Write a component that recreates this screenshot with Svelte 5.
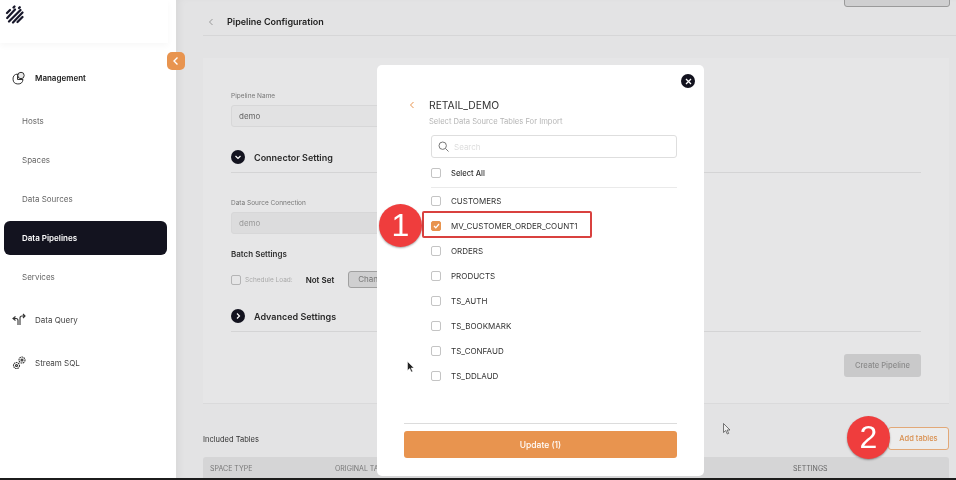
<script>
  const subItems = ['Hosts', 'Spaces', 'Data Sources', 'Data Pipelines', 'Services'];
  const tables = ['CUSTOMERS', 'MV_CUSTOMER_ORDER_COUNT1', 'ORDERS', 'PRODUCTS', 'TS_AUTH', 'TS_BOOKMARK', 'TS_CONFAUD', 'TS_DDLAUD'];
  const checked = 'MV_CUSTOMER_ORDER_COUNT1';
  const active = 'Data Pipelines';
</script>

<div class="screen">
  <aside class="sidebar">
    <div class="logo-bar">
      <svg class="logo" width="20" height="20" viewBox="0 0 20 20" fill="none" stroke="#17172a" stroke-width="2.200" stroke-linecap="round">
        <path d="M2 8l3-3M2.200 13L10 4.500M4 16.500L15.500 5M8 17.500L17.500 7.500M12.500 17l5-5M8.500 2.500l1-1M14 3l.8-.8"/>
      </svg>
    </div>
    <nav class="nav">
      <div class="nav-head strong">
        <svg width="14" height="14" viewBox="0 0 14 14" fill="none" stroke="#333" stroke-width="1"><path d="M5.500 3a5 5 0 1 0 5.500 5.500H5.500z"/><circle cx="9" cy="4.500" r="3.200" fill="#e8e8e8"/></svg>
        <span>Management</span>
      </div>
      {#each subItems as item}
        <div class="nav-sub" class:active={item === active}>{item}</div>
      {/each}
      <div class="nav-head query">
        <svg width="14" height="14" viewBox="0 0 14 14" fill="none" stroke="#333" stroke-width="1.100"><path d="M3.500 3.500L1 5.500l2.500 2M1 5.500h3q2 0 2 2V12M8 12V5q0-2 2-2h2.500M11 1l2 2-2 2"/></svg>
        <span>Data Query</span>
      </div>
      <div class="nav-head">
        <svg width="14" height="14" viewBox="0 0 14 14" fill="none" stroke="#333" stroke-width="1.100"><circle cx="4.500" cy="9.500" r="3" stroke-dasharray="1.600 .6"/><circle cx="4.500" cy="9.500" r="1"/><circle cx="10" cy="4" r="3" stroke-dasharray="1.600 .6"/><circle cx="10" cy="4" r="1"/></svg>
        <span>Stream SQL</span>
      </div>
    </nav>
  </aside>

  <main class="main">
    <div class="top-btn"></div>
    <header class="page-head">
      <svg width="6" height="8" viewBox="0 0 6 8" fill="none" stroke="#999" stroke-width="1"><path d="M4.500 1L1.500 4l3 3"/></svg>
      <h1>Pipeline Configuration</h1>
    </header>

    <section class="card">
      <label class="field-label" for="pipeline-name">Pipeline Name</label>
      <div class="input" id="pipeline-name">demo</div>

      <div class="section-row">
        <span class="round"><svg width="8" height="8" viewBox="0 0 8 8" fill="none" stroke="#fff" stroke-width="1.200"><path d="M1.500 3L4 5.500 6.500 3"/></svg></span>
        <h2>Connector Setting</h2>
      </div>
      <div class="rule"></div>

      <div class="field-label conn">Data Source Connection</div>
      <div class="input muted">demo</div>

      <h3>Batch Settings</h3>
      <div class="batch">
        <span class="box dim"></span>
        <span class="sched">Schedule Load:</span>
        <span class="notset">Not Set</span>
        <span class="change">Change</span>
      </div>

      <div class="section-row adv">
        <span class="round"><svg width="8" height="8" viewBox="0 0 8 8" fill="none" stroke="#fff" stroke-width="1.200"><path d="M3 1.500L5.500 4 3 6.500"/></svg></span>
        <h2>Advanced Settings</h2>
      </div>
      <div class="rule"></div>

      <div class="actions"><span class="create">Create Pipeline</span></div>
    </section>

    <div class="included">
      <span>Included Tables</span>
      <span class="add">Add tables</span>
    </div>
    <div class="thead">
      <span class="c1">SPACE TYPE</span>
      <span class="c2">ORIGINAL TABLE</span>
      <span class="c3">SETTINGS</span>
    </div>
  </main>

  <button class="collapse" aria-label="Collapse">
    <svg width="8" height="10" viewBox="0 0 8 10" fill="none" stroke="#fff" stroke-width="1.400"><path d="M5.500 1.500L2 5l3.500 3.500"/></svg>
  </button>

  <div class="modal">
    <button class="close" aria-label="Close">
      <svg width="7" height="7" viewBox="0 0 7 7" stroke="#fff" stroke-width="1.300"><path d="M1 1l5 5M6 1L1 6"/></svg>
    </button>
    <div class="modal-title">
      <svg width="6" height="8" viewBox="0 0 6 8" fill="none" stroke="#e8944f" stroke-width="1"><path d="M4.500 1L1.500 4l3 3"/></svg>
      <span>RETAIL_DEMO</span>
    </div>
    <p class="modal-sub">Select Data Source Tables For Import</p>
    <div class="search">
      <svg width="11" height="11" viewBox="0 0 11 11" fill="none" stroke="#777" stroke-width="1"><circle cx="4.700" cy="4.700" r="3.700"/><path d="M7.500 7.500l3 3"/></svg>
      <span>Search</span>
    </div>
    <div class="select-all row"><span class="box"></span><span>Select All</span></div>
    <div class="list">
      {#each tables as t}
        <div class="row" class:on={t === checked}>
          <span class="box">
            {#if t === checked}
              <svg width="7" height="6" viewBox="0 0 7 6" fill="none" stroke="#fff" stroke-width="1.300"><path d="M1 3l1.800 1.800L6 1"/></svg>
            {/if}
          </span>
          <span>{t}</span>
        </div>
      {/each}
    </div>
    <div class="modal-foot">
      <div class="update">Update (1)</div>
    </div>
  </div>

  <div class="highlight"></div>
  <div class="badge one">1</div>
  <div class="badge two">2</div>

  <svg class="cursor c-a" width="8" height="12" viewBox="0 0 8 12"><path d="M.5.500v9l2.200-2 1.600 3.500 1.400-.6-1.600-3.400H7z" fill="#222" stroke="#fff" stroke-width=".5"/></svg>
  <svg class="cursor c-b" width="8" height="12" viewBox="0 0 8 12"><path d="M.5.500v9l2.200-2 1.600 3.500 1.400-.6-1.600-3.400H7z" fill="#eee" stroke="#444" stroke-width=".7"/></svg>
  <div class="bottom-line"></div>
</div>

<style>
  :global(body) { margin: 0; }
  .screen {
    position: relative;
    width: 956px;
    height: 480px;
    overflow: hidden;
    display: flex;
    font-family: "Inter", "Liberation Sans", sans-serif;
    color: #333;
    background: #fff;
    filter: blur(0.35px);
  }
  .sidebar { width: 176px; flex-shrink: 0; background: #fff; }
  .logo-bar {
    height: 43px;
    box-shadow: 0 3px 6px rgba(0, 0, 0, 0.03);
    padding: 5px 0 0 5px;
    box-sizing: border-box;
    width: 168px;
  }
  .logo { display: block; }
  .nav { padding-top: 25px; }
  .nav-head {
    display: flex;
    align-items: center;
    gap: 9px;
    height: 20px;
    padding-left: 12px;
    font-size: 8px;
    color: #444;
  }
  .nav-head.strong { font-weight: 600; color: #222; }
  .nav-head.query { margin-top: 16px; margin-bottom: 23px; }
  .nav-sub {
    height: 34px;
    margin: 5px 9px 0 4px;
    padding-left: 18px;
    display: flex;
    align-items: center;
    font-size: 8px;
    color: #666;
  }
  .nav-head + .nav-sub { margin-top: 16px; }
  .nav-sub.active {
    background: #13131f;
    color: #fff;
    font-weight: 600;
    border-radius: 6px;
  }

  .main {
    flex: 1;
    background: #e3e3e4;
    position: relative;
    padding: 0 7px 0 27px;
    min-width: 0;
    box-shadow: inset 6px 0 8px -4px rgba(0, 0, 0, 0.06);
  }
  .top-btn {
    position: absolute;
    top: -6px;
    right: 6px;
    width: 104px;
    height: 11px;
    border: 1px solid #9a9a9a;
    border-radius: 3px;
    background: #cfcfd0;
  }
  .page-head {
    height: 36px;
    display: flex;
    align-items: center;
    gap: 13px;
    padding: 8px 0 0 5px;
    border-bottom: 1px solid #d6d6d7;
    box-sizing: border-box;
    margin-right: -7px;
  }
  h1 { font-size: 9px; font-weight: 600; margin: 0; color: #222; }
  .card {
    margin-top: 22px;
    height: 346px;
    padding: 34px 28px 0 28px;
    background: #e6e6e7;
    box-sizing: border-box;
    border-bottom: 1px solid #dadadb;
  }
  .field-label { display: block; font-size: 6.500px; color: #777; line-height: 9px; }
  .field-label.conn { margin-top: 26px; }
  .input {
    margin-top: 4px;
    height: 22px;
    width: 300px;
    border: 1px solid #d7d7d8;
    border-radius: 3px;
    background: #e2e2e3;
    font-size: 8px;
    color: #666;
    display: flex;
    align-items: center;
    padding-left: 7px;
    box-sizing: border-box;
  }
  .input.muted { color: #999; background: #dcdcdd; }
  .section-row {
    display: flex;
    align-items: center;
    gap: 9px;
    margin-top: 23px;
    height: 14px;
  }
  .round {
    width: 14px;
    height: 14px;
    border-radius: 50%;
    background: #13131f;
    display: flex;
    align-items: center;
    justify-content: center;
  }
  h2 { font-size: 9px; font-weight: 600; margin: 0; color: #2a2a2a; }
  .rule { height: 1px; background: #d4d4d5; margin-top: 8px; }
  h3 { font-size: 8px; font-weight: 600; margin: 15px 0 0; color: #333; line-height: 10px; }
  .batch { display: flex; align-items: center; height: 17px; margin-top: 12px; }
  .box {
    width: 10px;
    height: 10px;
    border: 1px solid #c4c4c4;
    border-radius: 2px;
    background: #fff;
    flex-shrink: 0;
    display: flex;
    align-items: center;
    justify-content: center;
    box-sizing: border-box;
  }
  .box.dim { background: transparent; border-color: #b4b4b5; }
  .sched { font-size: 6.500px; color: #aaa; margin-left: 4px; }
  .notset { font-size: 8px; font-weight: 600; color: #222; margin-left: 13px; }
  .change {
    margin-left: 14px;
    width: 40px;
    height: 17px;
    border: 1px solid #a0a0a0;
    border-radius: 3px;
    background: #cfcfd0;
    font-size: 8px;
    color: #777;
    padding-left: 9px;
    box-sizing: border-box;
    line-height: 15px;
  }
  .section-row.adv { margin-top: 21px; }
  .actions { display: flex; justify-content: flex-end; margin-top: 22px; }
  .create {
    width: 77px;
    height: 23px;
    border-radius: 3px;
    background: #c9c9ca;
    color: #8a8a8a;
    font-size: 7.600px;
    font-weight: 500;
    display: flex;
    align-items: center;
    justify-content: center;
  }
  .included {
    height: 44px;
    display: flex;
    align-items: center;
    justify-content: space-between;
    font-size: 7.500px;
    color: #333;
    padding-top: 28px;
    box-sizing: border-box;
    margin-top: -1px;
  }
  .add {
    width: 61px;
    height: 23px;
    margin-top: -26px;
    position: relative;
    top: 12px;
    border: 1px solid #e2a877;
    border-radius: 3px;
    color: #d98f4f;
    font-size: 7.500px;
    font-weight: 500;
    display: flex;
    align-items: center;
    justify-content: center;
    background: #ececec;
    box-sizing: border-box;
  }
  .thead {
    margin-top: 10px;
    height: 40px;
    background: #d5d5d6;
    border-radius: 3px 3px 0 0;
    font-size: 7px;
    color: #777;
    display: flex;
    padding-top: 7px;
    box-sizing: border-box;
  }
  .c1 { margin-left: 7px; width: 125px; }
  .c2 { width: 458px; }
  .c3 { color: #666; }

  .collapse {
    position: absolute;
    left: 167px;
    top: 52px;
    width: 18px;
    height: 18px;
    border: none;
    padding: 0;
    border-radius: 5px;
    background: #e8944f;
    display: flex;
    align-items: center;
    justify-content: center;
  }

  .modal {
    position: absolute;
    left: 377px;
    top: 65px;
    width: 327px;
    height: 411px;
    background: #fff;
    border-radius: 5px;
    padding: 0 27px;
    box-sizing: border-box;
    display: flex;
    flex-direction: column;
  }
  .close {
    position: absolute;
    right: 9px;
    top: 9px;
    width: 14px;
    height: 14px;
    border: none;
    padding: 0;
    border-radius: 50%;
    background: #13131f;
    display: flex;
    align-items: center;
    justify-content: center;
  }
  .modal-title {
    display: flex;
    align-items: center;
    gap: 14px;
    margin: 33px 0 0 5px;
    height: 13px;
    font-size: 10.300px;
    color: #333;
  }
  .modal-sub { margin: 5px 0 0 25px; font-size: 7.600px; line-height: 11px; color: #b5b5b5; }
  .search {
    margin: 8px 0 0 27px;
    height: 23px;
    width: 246px;
    border: 1px solid #dedede;
    border-radius: 3px;
    display: flex;
    align-items: center;
    gap: 5px;
    padding-left: 6px;
    font-size: 8px;
    color: #ddd;
    box-sizing: border-box;
  }
  .row {
    display: flex;
    align-items: center;
    gap: 10px;
    height: 25px;
    margin-left: 27px;
    width: 246px;
    font-size: 8px;
    color: #333;
    box-sizing: border-box;
  }
  .select-all {
    height: 30px;
    padding-top: 1px;
    border-bottom: 1px solid #eaeaea;
    font-size: 7.600px;
    font-weight: 500;
  }
  .row.on .box { background: #e8944f; border-color: #e8944f; }
  .modal-foot {
    margin-top: auto;
    border-top: 1px solid #dcdcdc;
    padding-top: 7px;
    height: 53px;
    box-sizing: border-box;
  }
  .update {
    height: 27px;
    border-radius: 3px;
    background: #e8944f;
    color: #fff;
    font-size: 8.500px;
    font-weight: 500;
    display: flex;
    align-items: center;
    justify-content: center;
  }

  .highlight {
    position: absolute;
    left: 422px;
    top: 211px;
    width: 170px;
    height: 27px;
    border: 2px solid #d9413f;
    border-radius: 2px;
    box-sizing: border-box;
  }
  .badge {
    position: absolute;
    width: 43px;
    height: 43px;
    border-radius: 50%;
    background: #ef3d3d;
    color: #fff;
    font-family: "Liberation Sans", sans-serif;
    font-size: 32px;
    display: flex;
    align-items: center;
    justify-content: center;
    box-shadow: 0 1px 2px rgba(0, 0, 0, 0.35);
  }
  .one { left: 379px; top: 204px; }
  .two { left: 847px; top: 416px; }
  .cursor { position: absolute; }
  .c-a { left: 407px; top: 361px; }
  .c-b { left: 723px; top: 423px; }
  .bottom-line {
    position: absolute;
    left: 0;
    right: 0;
    bottom: 0;
    height: 2px;
    background: #1c1c1c;
  }
</style>
